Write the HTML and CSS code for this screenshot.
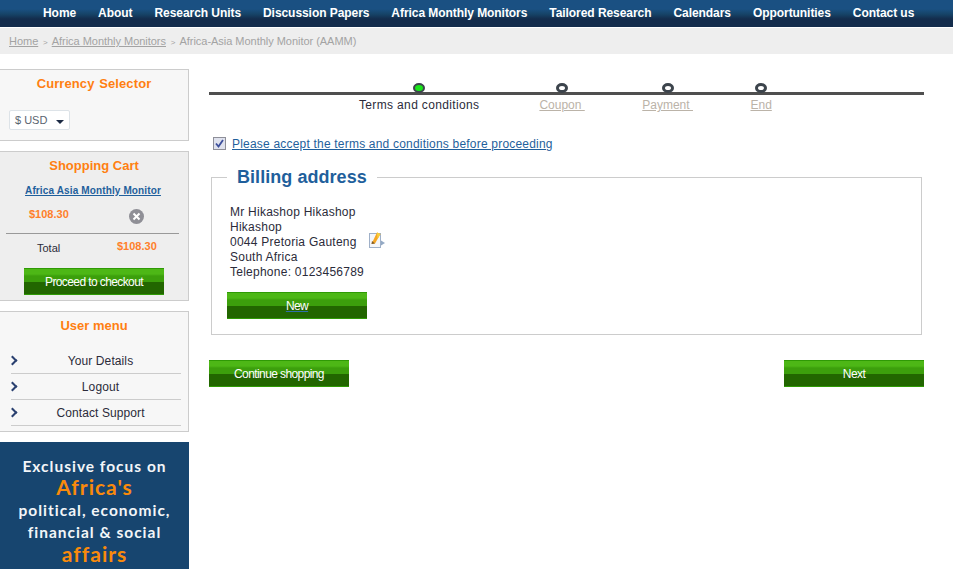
FILE: index.html
```html
<!DOCTYPE html>
<html lang="en">
<head>
    <meta charset="UTF-8">
    <meta name="viewport" content="width=device-width, initial-scale=1.0">
    <title>Africa-Asia Monthly Monitor - Checkout</title>
    <link rel="stylesheet" href="styles.css">
</head>
<body>
    <nav class="topnav">
        <a href="#">Home</a>
        <a href="#">About</a>
        <a href="#">Research Units</a>
        <a href="#">Discussion Papers</a>
        <a href="#">Africa Monthly Monitors</a>
        <a href="#">Tailored Research</a>
        <a href="#">Calendars</a>
        <a href="#">Opportunities</a>
        <a href="#">Contact us</a>
    </nav>
    <div class="breadcrumb">
        <a href="#">Home</a>
        <span class="sep">&gt;</span>
        <a href="#">Africa Monthly Monitors</a>
        <span class="sep">&gt;</span>
        <span>Africa-Asia Monthly Monitor (AAMM)</span>
    </div>

    <div class="page">
        <aside class="sidebar">
            <section class="box currency">
                <h3>Currency Selector</h3>
                <div class="select">$ USD<span class="caret"></span></div>
            </section>

            <section class="box cart">
                <h3>Shopping Cart</h3>
                <a class="cart-item" href="#">Africa Asia Monthly Monitor</a>
                <div class="cart-row">
                    <span class="price">$108.30</span>
                    <svg class="remove" width="15" height="15" viewBox="0 0 15 15">
                        <circle cx="7.5" cy="7.5" r="7.5" fill="#8f8f96"/>
                        <path d="M4.5 4.5l6 6M10.5 4.5l-6 6" stroke="#fff" stroke-width="2"/>
                    </svg>
                </div>
                <div class="cart-total">
                    <span class="total-label">Total</span>
                    <span class="price total-price">$108.30</span>
                </div>
                <a class="btn btn-cart" href="#">Proceed to checkout</a>
            </section>

            <section class="box usermenu">
                <h3>User menu</h3>
                <ul>
                    <li><a href="#">Your Details</a></li>
                    <li><a href="#">Logout</a></li>
                    <li><a href="#">Contact Support</a></li>
                </ul>
            </section>

            <div class="banner">
                <p>Exclusive focus on</p>
                <p class="big">Africa's</p>
                <p>political, economic,</p>
                <p>financial &amp; social</p>
                <p class="big affairs">affairs</p>
            </div>
        </aside>

        <main class="content">
            <div class="stepper">
                <div class="step current"><span class="dot"></span><span class="step-label">Terms and conditions</span></div>
                <div class="step"><span class="dot"></span><a class="step-label" href="#">Coupon&nbsp;</a></div>
                <div class="step"><span class="dot"></span><a class="step-label" href="#">Payment&nbsp;</a></div>
                <div class="step"><span class="dot"></span><a class="step-label" href="#">End</a></div>
            </div>

            <label class="terms">
                <span class="checkbox">
                    <svg width="9" height="9" viewBox="0 0 9 9"><path d="M1 4.5l2.5 3L8 1" fill="none" stroke="#3c4f9c" stroke-width="1.8"/></svg>
                </span>
                <a href="#">Please accept the terms and conditions before proceeding</a>
            </label>

            <fieldset class="billing">
                <legend>Billing address</legend>
                <div class="address">
                    Mr Hikashop Hikashop<br>
                    Hikashop<br>
                    0044 Pretoria Gauteng
                    <svg class="edit" width="17" height="17" viewBox="0 0 17 17">
                        <rect x="1.5" y="2.5" width="11" height="14" fill="#f4f6fa" stroke="#9fb0c8"/>
                        <path d="M13 9.5l4 2.5-4 2.5z" fill="#93a9c4"/>
                        <path d="M3.5 13L9 1.5l3.5 1.5-5.5 9.5z" fill="#f5a623"/>
                        <path d="M3.5 13l.5-3 3 2.5z" fill="#7a5a2a"/>
                        <path d="M9 1.5l3.5 1.5-3 5z" fill="#f7cf3d"/>
                    </svg><br>
                    South Africa<br>
                    Telephone: 0123456789
                </div>
                <a class="btn btn-new" href="#">New</a>
            </fieldset>

            <div class="actions">
                <a class="btn" href="#">Continue shopping</a>
                <a class="btn" href="#">Next</a>
            </div>
        </main>
    </div>
</body>
</html>
```

FILE: styles.css
```css
html, body {
    height: 569px;
    overflow: hidden;
}
body {
    font-family: "Liberation Sans", Arial, sans-serif;
    font-size: 12px;
    line-height: 15px;
    margin: 0;
    padding: 0;
    background-color: #fff;
    color: #2b2b3a;
}
a {
    color: #1f5f9c;
}
p, h3, ul {
    margin: 0;
    padding: 0;
}

/* top bar */
.topnav {
    display: flex;
    gap: 22px;
    height: 27px;
    padding-left: 43px;
    background: linear-gradient(#1a5082 0, #1a5082 9px, #164468 14px, #132c4c 19px, #132c4c 100%);
    line-height: 27px;
    letter-spacing: -0.06px;
    border-bottom: 1px solid #fff;
}
.topnav a {
    color: #fff;
    font-weight: bold;
    text-decoration: none;
}
.breadcrumb {
    height: 26px;
    padding-left: 9px;
    background-color: #eee;
    color: #a3a3a3;
    font-size: 11px;
    line-height: 27px;
    letter-spacing: -0.03px;
}
.breadcrumb a {
    color: #a3a3a3;
}
.breadcrumb .sep {
    margin: 0 1.7px;
    font-size: 8px;
}

/* columns */
.page {
    display: flex;
    gap: 20px;
    padding-top: 15px;
}
.sidebar {
    display: flex;
    flex-direction: column;
    gap: 10px;
    width: 189px;
    flex-shrink: 0;
}
.box {
    border: 1px solid #ccc;
    border-left: none;
    background-color: #f7f7f7;
    box-sizing: border-box;
    padding-top: 6px;
}
.box h3 {
    color: #ff7f11;
    font-size: 13px;
    line-height: 16px;
    text-align: center;
}

/* currency */
.currency {
    height: 72px;
}
.currency h3 {
    letter-spacing: 0.1px;
    word-spacing: 1px;
}
.select {
    display: flex;
    align-items: center;
    justify-content: space-between;
    width: 49px;
    height: 18px;
    margin: 18px 0 0 9px;
    padding: 0 5px;
    border: 1px solid #dde3e8;
    border-radius: 2px;
    background-color: #fff;
    color: #5a6470;
    font-size: 11px;
}
.caret {
    margin-top: 3px;
    border-top: 4px solid #1c2a44;
    border-left: 4px solid transparent;
    border-right: 4px solid transparent;
}

/* cart */
.cart {
    height: 150px;
    background-color: #eee;
}
.cart-item {
    display: block;
    margin-top: 9px;
    padding-right: 2px;
    font-size: 10px;
    font-weight: bold;
    text-align: center;
    letter-spacing: 0.13px;
}
.cart-row {
    display: flex;
    align-items: center;
    height: 20px;
    margin-top: 6px;
    padding-left: 29px;
}
.price {
    color: #ff7f2a;
    font-size: 11px;
    font-weight: bold;
}
.remove {
    margin: 5px 0 0 60px;
}
.cart-total {
    display: flex;
    margin: 9px 9px 0 6px;
    padding: 6px 0 0 31px;
    border-top: 1px solid #999;
    height: 27px;
    box-sizing: border-box;
}
.total-label {
    width: 80px;
    font-size: 11px;
    line-height: 17px;
}
.total-price {
    margin-top: -1px;
}
.btn-cart {
    margin: 8px 0 0 24px;
}

/* buttons */
.btn {
    display: block;
    width: 140px;
    height: 27px;
    background: linear-gradient(#2f9a05 0, #2f9a05 1px, #4db716 1px, #4db716 6px, #3c9f0c 8px, #3c9f0c 14px, #226600 14px, #226600 26px, #2f9a05 26px);
    color: #fff;
    line-height: 28px;
    text-align: center;
    text-decoration: none;
    letter-spacing: -0.6px;
}
.btn-new {
    margin-top: 12px;
    text-decoration: underline;
    text-decoration-color: #2f6fa8;
}

/* user menu */
.usermenu {
    height: 121px;
}
.usermenu ul {
    list-style: none;
    margin: 14px 7px 0 11px;
}
.usermenu li {
    position: relative;
    height: 26px;
    box-sizing: border-box;
    padding-left: 9px;
    border-bottom: 1px solid #ccc;
    line-height: 26px;
    text-align: center;
    letter-spacing: 0.1px;
}
.usermenu li::before {
    content: "";
    position: absolute;
    left: -2px;
    top: 9px;
    width: 5px;
    height: 5px;
    border-top: 2px solid #2a4070;
    border-right: 2px solid #2a4070;
    transform: rotate(45deg);
}
.usermenu a {
    color: #2b2b3a;
    text-decoration: none;
}

/* banner */
.banner {
    height: 131px;
    padding-top: 13px;
    box-sizing: border-box;
    background-color: #17456f;
    color: #f2f5f8;
    font-family: Lato, sans-serif;
    font-size: 15.5px;
    font-weight: 700;
    line-height: 22px;
    letter-spacing: 1px;
    text-align: center;
}
.banner p {
    height: 22px;
}
.banner .big {
    height: 18px;
    margin: 1px 0 3px;
    color: #f98a0b;
    font-size: 21px;
    line-height: 18px;
    letter-spacing: 1px;
}
.banner .affairs {
    margin-top: 2px;
}

/* main column */
.content {
    width: 715px;
    letter-spacing: 0.2px;
}
.stepper {
    display: flex;
    gap: 57.5px;
    padding: 14px 0 0 150px;
    box-sizing: border-box;
    height: 47px;
    background: linear-gradient(#4f4f4f, #4f4f4f) 0 23px / 100% 3px no-repeat;
}
.step {
    display: flex;
    flex-direction: column;
    align-items: center;
}
.step.current {
    margin-right: 2.5px;
}
.dot {
    width: 12px;
    height: 10px;
    box-sizing: border-box;
    border: 3px solid #3c444c;
    border-radius: 50%;
    background-color: #fff;
}
.step.current .dot {
    border-width: 2px;
    background-color: #19e619;
}
.step-label {
    margin-top: 5px;
    color: #bbb3a8;
    letter-spacing: 0;
}
.step.current .step-label {
    color: #2b2b3a;
    letter-spacing: 0.35px;
}
.terms {
    display: flex;
    align-items: center;
    gap: 6px;
    margin: 21px 0 0 4px;
}
.checkbox {
    display: flex;
    align-items: center;
    justify-content: center;
    width: 11px;
    height: 11px;
    border: 1px solid #8e8f99;
    background-color: #dfe2ee;
    margin-top: -3px;
}
.billing {
    margin: 13px 2px 0;
    padding: 16px 18px 15px 15px;
    border: 1px solid #ccc;
    min-width: 0;
}
.billing legend {
    padding: 0 10px;
    color: #1f5f9c;
    font-size: 18px;
    font-weight: bold;
    line-height: 24px;
    letter-spacing: 0.05px;
}
.address {
    padding-left: 3px;
    letter-spacing: 0.25px;
}
.edit {
    vertical-align: top;
    margin: -4px 0 -3px 8px;
}
.actions {
    display: flex;
    justify-content: space-between;
    margin-top: 25px;
}
```
